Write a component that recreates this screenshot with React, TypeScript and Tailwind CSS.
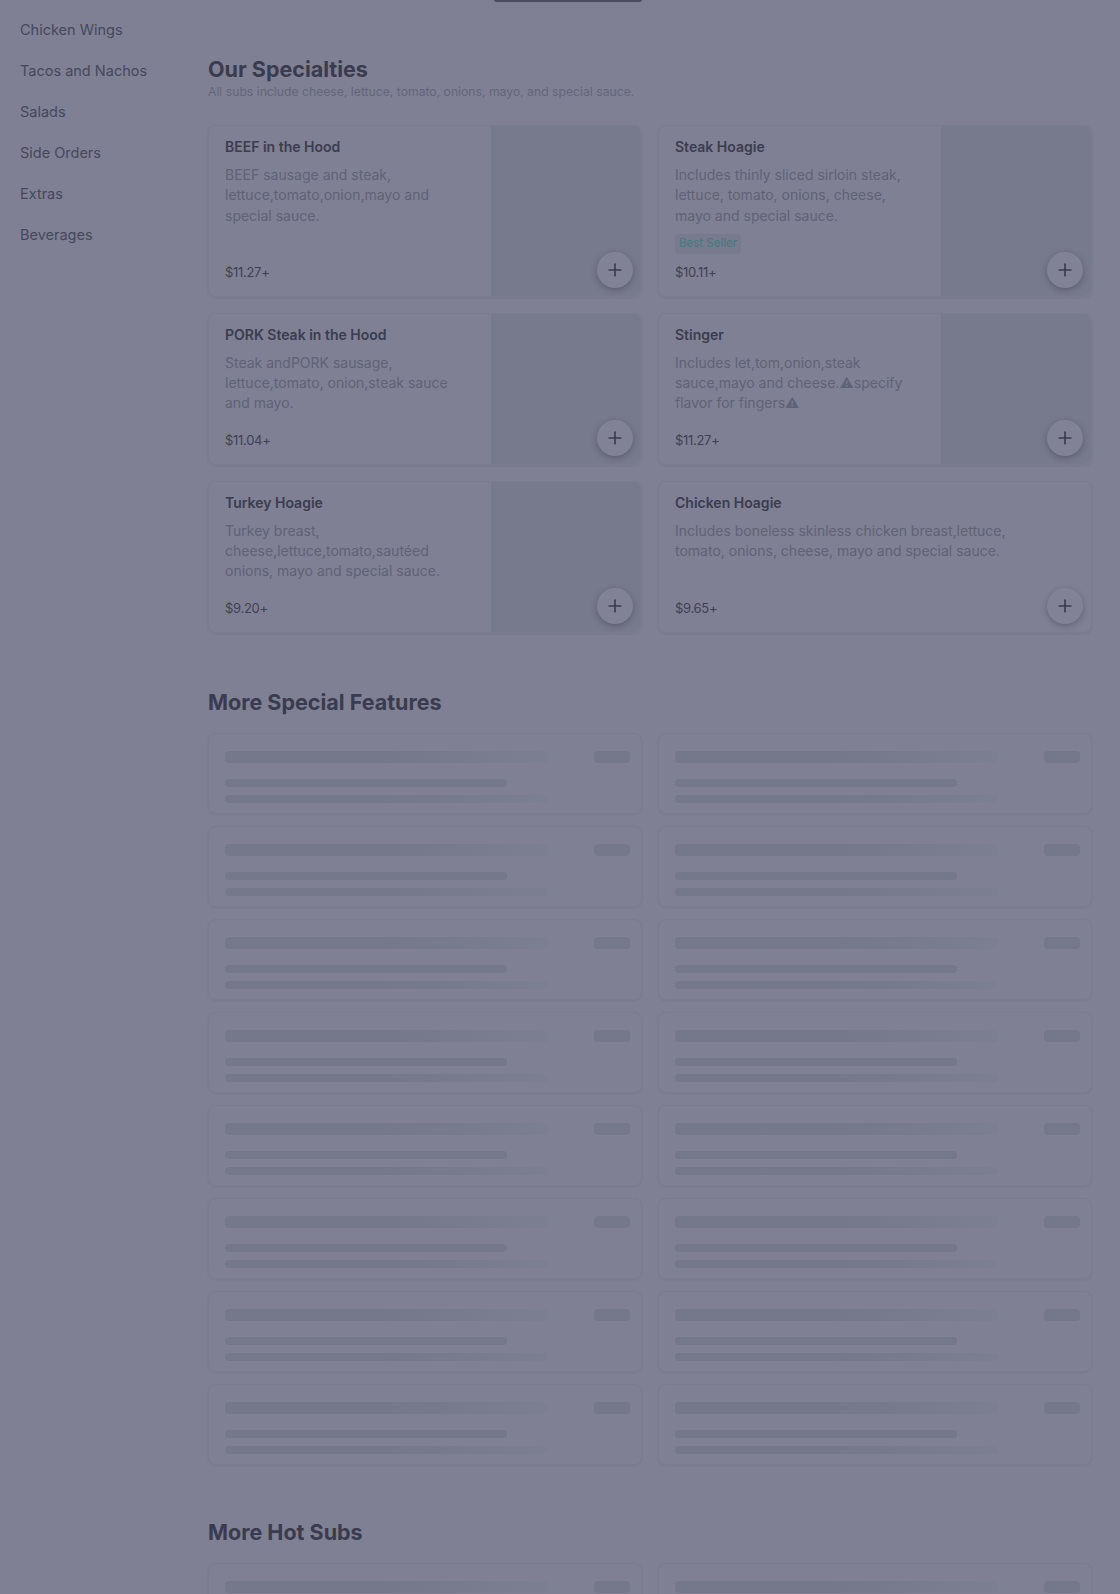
import { Plus } from 'lucide-react';

type Item = {
    name: string;
    description: string;
    price: string;
    image: boolean;
    badge?: string;
};

const categories = ['Chicken Wings', 'Tacos and Nachos', 'Salads', 'Side Orders', 'Extras', 'Beverages'];

const specialties: Item[] = [
    { name: 'BEEF in the Hood', description: 'BEEF sausage and steak, lettuce,tomato,onion,mayo and special sauce.', price: '$11.27+', image: true },
    { name: 'Steak Hoagie', description: 'Includes thinly sliced sirloin steak, lettuce, tomato, onions, cheese, mayo and special sauce.', price: '$10.11+', image: true, badge: 'Best Seller' },
    { name: 'PORK Steak in the Hood', description: 'Steak andPORK sausage, lettuce,tomato, onion,steak sauce and mayo.', price: '$11.04+', image: true },
    { name: 'Stinger', description: 'Includes let,tom,onion,steak sauce,mayo and cheese.\u26A0specify flavor for fingers\u26A0', price: '$11.27+', image: true },
    { name: 'Turkey Hoagie', description: 'Turkey breast, cheese,lettuce,tomato,sautéed onions, mayo and special sauce.', price: '$9.20+', image: true },
    { name: 'Chicken Hoagie', description: 'Includes boneless skinless chicken breast,lettuce, tomato, onions, cheese, mayo and special sauce.', price: '$9.65+', image: false },
];

function AddButton() {
    return (
        <button className="absolute bottom-[8px] right-2 flex h-9 w-9 items-center justify-center rounded-full bg-[#818296] text-[#3b3c4f] shadow-[0_2px_6px_rgba(20,20,40,0.28)]">
            <Plus size={20} strokeWidth={2} />
        </button>
    );
}

function ItemCard({ item }: { item: Item }) {
    return (
        <div className="relative flex rounded-lg border border-[#7a7c90] shadow-[0_1px_3px_rgba(20,20,40,0.08)]">
            <div className="flex flex-1 flex-col px-4 pt-[11px] pb-[14px]">
                <h3 className="text-[14px] font-semibold leading-5 text-[#3b3c4f]">{item.name}</h3>
                <p className={`mt-2 text-[14px] leading-[20.3px] text-[#606275] ${item.image ? '' : 'max-w-[345px]'}`}>{item.description}</p>
                {item.badge && (
                    <span className="mt-2 flex h-5 w-fit items-center rounded-sm bg-[#787b8d] px-1 text-[11.5px] text-[#447a80]">{item.badge}</span>
                )}
                <div className="flex-1" />
                <p className={`${item.badge ? 'mt-2' : 'mt-4'} text-[13px] leading-5 tracking-[-0.3px] text-[#3f4053]`}>{item.price}</p>
            </div>
            {item.image && <div className="w-[150px] shrink-0 rounded-r-lg bg-[#77798c]" />}
            <AddButton />
        </div>
    );
}

function SkeletonCard() {
    return (
        <div className="h-[81px] rounded-lg border border-[#7a7c90] px-4 pt-[17px] shadow-[0_1px_3px_rgba(20,20,40,0.06)]">
            <div className="flex items-start justify-between">
                <div className="h-3 w-[323px] rounded bg-gradient-to-r from-[#75778a] via-[#75778a] to-[#7c7e91]" />
                <div className="-mr-[5px] h-3 w-9 rounded bg-[#75778a]" />
            </div>
            <div className="mt-4 h-2 w-[282px] rounded bg-[#75778a]" />
            <div className="mt-2 h-2 w-[323px] rounded bg-gradient-to-r from-[#75778a] via-[#75778a] to-[#7c7e91]" />
        </div>
    );
}

function SkeletonSection({ title, rows, className }: { title: string; rows: number; className: string }) {
    return (
        <section className={className}>
            <h2 className="text-[21.5px] font-bold leading-7 text-[#3a3b4e]">{title}</h2>
            <div className="mt-[17px] grid grid-cols-2 gap-x-4 gap-y-3">
                {Array.from({ length: rows * 2 }).map((_, i) => (
                    <SkeletonCard key={i} />
                ))}
            </div>
        </section>
    );
}

export default function App() {
    return (
        <div className="flex h-[1594px] w-full overflow-hidden bg-[#7f8093] font-['Inter',sans-serif]">
            <aside className="w-[208px] shrink-0 pl-5 pt-[9px]">
                <ul>
                    {categories.map((c) => (
                        <li key={c} className="py-[10px] text-[14.5px] leading-[21px] text-[#46485b]">{c}</li>
                    ))}
                </ul>
            </aside>

            <main className="flex-1 pr-7">
                <div className="grid grid-cols-2 gap-x-4">
                    <div className="flex justify-end">
                        <div className="h-[2px] w-[148px] rounded-b bg-[#4b4d5f]" />
                    </div>
                    <div />
                </div>

                <section className="mt-[53px]">
                    <h2 className="text-[21.5px] font-bold leading-7 text-[#3a3b4e]">Our Specialties</h2>
                    <p className="mt-px text-[12.2px] leading-[15px] text-[#64667a]">All subs include cheese, lettuce, tomato, onions, mayo, and special sauce.</p>
                    <div className="mt-[26px] grid grid-cols-2 gap-4">
                        {specialties.map((item) => (
                            <ItemCard key={item.name} item={item} />
                        ))}
                    </div>
                </section>

                <SkeletonSection className="mt-[55px]" title="More Special Features" rows={8} />
                <SkeletonSection className="mt-[53px]" title="More Hot Subs" rows={2} />
            </main>
        </div>
    );
}
